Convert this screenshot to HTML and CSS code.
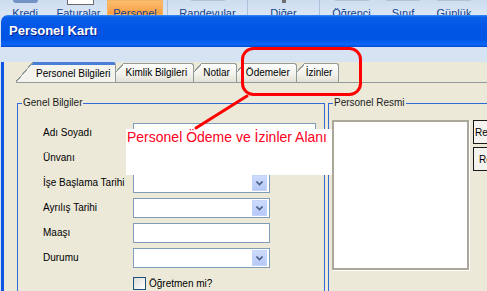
FILE: index.html
```html
<!DOCTYPE html>
<html lang="tr">
<head>
    <meta charset="UTF-8">
    <meta name="viewport" content="width=device-width, initial-scale=1.0">
    <title>Personel Kartı</title>
    <link rel="stylesheet" href="styles.css">
</head>
<body>
    <div class="ribbon">
        <div class="rb-item rb-kredi"><span class="rb-icon ic-kredi"></span><span class="rb-label">Kredi</span></div>
        <div class="rb-item rb-fatura"><span class="rb-icon ic-fatura"></span><span class="rb-label">Faturalar</span></div>
        <div class="rb-item rb-personel active"><span class="rb-icon"></span><span class="rb-label">Personel</span></div>
        <div class="rb-item rb-randevu sep"><span class="rb-icon ic-grey"></span><span class="rb-label">Randevular</span></div>
        <div class="rb-item rb-diger sep"><span class="rb-icon ic-diger"></span><span class="rb-label">Diğer</span></div>
        <div class="rb-item rb-ogrenci sep"><span class="rb-icon ic-grey"></span><span class="rb-label">Öğrenci</span></div>
        <div class="rb-item rb-sinif"><span class="rb-icon ic-grey"></span><span class="rb-label">Sınıf</span></div>
        <div class="rb-item rb-gunluk"><span class="rb-icon ic-grey"></span><span class="rb-label">Günlük</span></div>
    </div>

    <div class="window">
        <div class="titlebar">Personel Kartı</div>
        <div class="window-body">
            <div class="tabs">
                <div class="tab active">Personel Bilgileri</div>
                <div class="tab">Kimlik Bilgileri</div>
                <div class="tab">Notlar</div>
                <div class="tab">Ödemeler</div>
                <div class="tab">İzinler</div>
            </div>
            <div class="tab-page">
                <fieldset class="group group-genel">
                    <legend>Genel Bilgiler</legend>
                    <div class="form">
                        <label>Adı Soyadı</label>
                        <div class="input wide"></div>

                        <label>Ünvanı</label>
                        <div class="input wide"></div>

                        <label>İşe Başlama Tarihi</label>
                        <div class="input combo"><span class="combo-btn"><svg width="7" height="5" viewBox="0 0 7 5"><polyline points="0.5,0.5 3.5,3.5 6.5,0.5" fill="none" stroke="#4d6185" stroke-width="1.6"/></svg></span></div>

                        <label>Ayrılış Tarihi</label>
                        <div class="input combo"><span class="combo-btn"><svg width="7" height="5" viewBox="0 0 7 5"><polyline points="0.5,0.5 3.5,3.5 6.5,0.5" fill="none" stroke="#4d6185" stroke-width="1.6"/></svg></span></div>

                        <label>Maaşı</label>
                        <div class="input"></div>

                        <label>Durumu</label>
                        <div class="input combo"><span class="combo-btn"><svg width="7" height="5" viewBox="0 0 7 5"><polyline points="0.5,0.5 3.5,3.5 6.5,0.5" fill="none" stroke="#4d6185" stroke-width="1.6"/></svg></span></div>

                        <span></span>
                        <div class="check"><span class="check-box"></span>Öğretmen mi?</div>
                    </div>
                </fieldset>
                <fieldset class="group group-resim">
                    <legend>Personel Resmi</legend>
                    <div class="photo-area">
                        <div class="photo"></div>
                        <div class="photo-buttons">
                            <button class="btn">Resim Yükle</button>
                            <button class="btn btn-sil">Resmi Sil</button>
                        </div>
                    </div>
                </fieldset>
            </div>
        </div>
    </div>

    <div class="note">Personel Ödeme ve İzinler Alanı</div>
    <svg class="callout" width="487" height="291" viewBox="0 0 487 291">
        <rect x="242.5" y="48.5" width="118" height="46" rx="11" fill="none" stroke="#f00" stroke-width="3"/>
        <line x1="247" y1="96" x2="196" y2="128" stroke="#f00" stroke-width="3" stroke-linecap="round"/>
    </svg>
</body>
</html>
```

FILE: styles.css
```css
body {
    margin: 0;
    width: 487px;
    height: 291px;
    overflow: hidden;
    position: relative;
    background-color: #d6e3f3;
    font-family: "Liberation Sans", Arial, sans-serif;
    font-size: 10px;
    color: #000;
}
.ribbon {
    display: flex;
    height: 15px;
    overflow: hidden;
    background: linear-gradient(#cddcf0, #dae6f5);
}
.rb-item {
    flex: none;
    display: flex;
    flex-direction: column;
    align-items: center;
    box-sizing: border-box;
    height: 15px;
    overflow: hidden;
}
.rb-item.sep {
    border-left: 1px solid #aec2dc;
}
.rb-kredi { width: 50px; }
.rb-fatura { width: 57px; }
.rb-personel { width: 56px; margin-right: 4px; }
.rb-randevu { width: 80px; }
.rb-diger { width: 72px; }
.rb-ogrenci { width: 64px; }
.rb-sinif { width: 40px; }
.rb-gunluk { width: 62px; }
.rb-item.active {
    background: linear-gradient(#fbc072, #f89b3c);
    box-shadow: inset 0 0 0 1px #f6b25e;
}
.rb-icon {
    flex: none;
    display: block;
    height: 5px;
    width: 26px;
}
.ic-kredi {
    height: 3px;
    width: 25px;
    margin-bottom: 2px;
    background-color: #7393c4;
    border-radius: 0 0 3px 3px;
}
.ic-fatura {
    width: 27px;
    box-sizing: border-box;
    margin-left: 4px;
    background-color: #fff;
    border: 1px solid #6b6b6b;
    border-top: none;
}
.ic-grey {
    height: 1px;
    width: 34px;
    margin-bottom: 4px;
    background-color: #b9c3d0;
}
.ic-diger {
    height: 3px;
    width: 4px;
    margin-bottom: 2px;
    background-color: #6f6f6f;
}
.rb-label {
    flex: none;
    font-size: 11px;
    line-height: 13px;
    margin-top: 2px;
    color: #15428b;
    white-space: nowrap;
}
.window {
    margin-left: 1px;
}
.titlebar {
    height: 32px;
    line-height: 32px;
    padding-left: 8px;
    border-radius: 7px 0 0 0;
    background: linear-gradient(#3a8cf8 0, #0a5fea 2px, #0457e6 35%, #0054e3 75%, #0b66f8 92%, #0048cc 100%);
    color: #fff;
    font-size: 13px;
    font-weight: bold;
    text-shadow: 1px 1px 0 #0a1f8c;
    white-space: nowrap;
}
.window-body {
    height: 244px;
    background-color: #ece9d8;
    border-left: 3px solid #0f56e4;
}
.tabs {
    display: flex;
    align-items: flex-end;
    margin: 15px 0 0 12px;
    border-bottom: 1px solid #919b9c;
}
.tab {
    position: relative;
    height: 18px;
    line-height: 18px;
    padding: 0 6px 0 9px;
    border-top: 1px solid #919b9c;
    border-right: 1px solid #919b9c;
    border-top-right-radius: 3px;
    background: linear-gradient(#fefefe, #f3f2ec 55%, #e3e1d5);
    white-space: nowrap;
}
.tab::before {
    content: "";
    position: absolute;
    left: 0;
    top: -1px;
    width: 8px;
    height: 9px;
    background: linear-gradient(to bottom right, #ece9d8 calc(50% - 0.6px), #919b9c calc(50% - 0.6px), #919b9c calc(50% + 0.6px), transparent calc(50% + 0.6px));
}
.tab.active {
    height: 17px;
    line-height: 17px;
    padding: 0 5px 0 20px;
    border-top: 3px solid #4a7ed6;
    background-color: #f4f3ee;
    background-image: none;
}
.tab.active::before {
    top: -3px;
    width: 17px;
    height: 20px;
}
.tab-page {
    display: flex;
    gap: 3px;
    margin: 14px 0 0 13px;
}
.group {
    flex: none;
    margin: 0;
    padding: 14px 0 0 0;
    border: 1px solid #3169d6;
    height: 220px;
    min-width: 0;
    box-sizing: border-box;
}
.group legend {
    margin-left: 4px;
    padding: 0 1px;
    line-height: 12px;
    font-size: 10px;
    color: #1a1a1a;
}
.group-genel {
    width: 308px;
}
.group-resim {
    width: 200px;
    padding-top: 11px;
}
.form {
    display: grid;
    grid-template-columns: 90px auto;
    grid-auto-rows: 20px;
    row-gap: 5px;
    padding-left: 25px;
}
.form label {
    line-height: 20px;
    white-space: nowrap;
}
.input {
    width: 137px;
    height: 20px;
    box-sizing: border-box;
    border: 1px solid #7f9db9;
    background-color: #fff;
}
.input.wide {
    width: 183px;
}
.combo {
    display: flex;
    justify-content: flex-end;
    padding: 1px;
}
.combo-btn {
    display: flex;
    align-items: center;
    justify-content: center;
    width: 15px;
    height: 16px;
    margin-right: 1px;
    border-radius: 1px;
    background: linear-gradient(#cfdcfd, #b3c7f7);
    box-shadow: inset 0 0 0 1px #c3d3fa;
}
.check {
    display: flex;
    align-items: center;
    gap: 3px;
    white-space: nowrap;
}
.check-box {
    width: 13px;
    height: 13px;
    box-sizing: border-box;
    border: 1px solid #1c5180;
    background: linear-gradient(135deg, #dcdcd7, #fff);
}
.photo-area {
    display: flex;
    gap: 4px;
    padding-left: 3px;
}
.photo {
    flex: none;
    width: 137px;
    height: 150px;
    box-sizing: border-box;
    border: 2px solid #aca899;
    background-color: #fff;
    box-shadow: 1px 1px 0 #fff;
}
.photo-buttons {
    display: flex;
    flex-direction: column;
    gap: 3px;
}
.btn {
    width: 60px;
    height: 24px;
    margin: 0;
    padding: 0 0 0 1px;
    border: 1px solid #1a1a1a;
    background-color: #f4f3ee;
    font-family: "Liberation Sans", Arial, sans-serif;
    font-size: 10px;
    color: #000;
    text-align: left;
    white-space: nowrap;
    overflow: hidden;
}
.btn-sil {
    padding-left: 5px;
}
.note {
    position: absolute;
    left: 126px;
    top: 129px;
    width: 205px;
    height: 46px;
    padding-left: 1px;
    background-color: #fff;
    color: #ff0020;
    font-size: 14px;
    line-height: 16px;
    white-space: nowrap;
}
.callout {
    position: absolute;
    left: 0;
    top: 0;
    pointer-events: none;
}
```
